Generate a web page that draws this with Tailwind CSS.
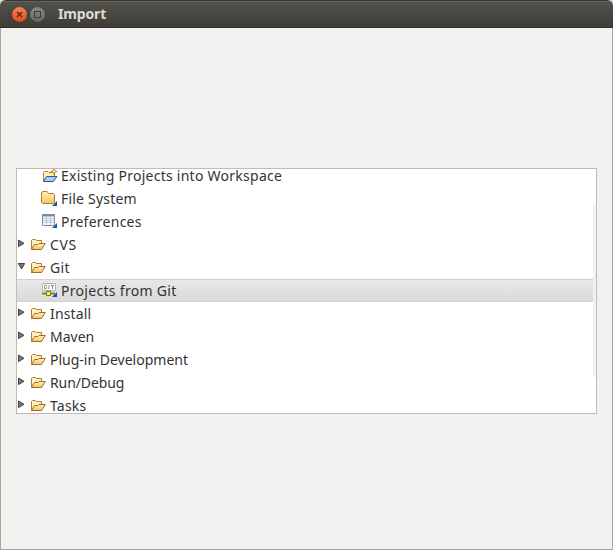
<!DOCTYPE html>
<html lang="en">
<head>
<meta charset="utf-8">
<title>Import</title>
<script src="https://cdn.jsdelivr.net/npm/@tailwindcss/browser@4"></script>
</head>
<body class="h-[550px] w-[613px] overflow-hidden bg-[#d8d8d8] font-['Noto_Sans',sans-serif]">
<svg class="absolute h-0 w-0">
  <linearGradient id="gold" x2="0" y2="1"><stop stop-color="#fff0b8"/><stop offset="1" stop-color="#f3c568"/></linearGradient>
  <symbol id="folder" viewBox="0 0 16 13"><path d="M1.500 10.500V2.500L2.500 1.500H5.500L6.500 2.500H11.500V5.500L11 11.500H1.500Z" fill="#fff0c4" stroke="#b67a2b"/><path d="M1.500 11.500L4.500 6.500H8L9 5.500H15.300L11.500 11.500Z" fill="url(#gold)" stroke="#a96a20"/></symbol>
  <symbol id="right" viewBox="0 0 8 9"><path d="M1.500 1V7.600L7 4.300Z" fill="#777" stroke="#444"/></symbol>
  <symbol id="down" viewBox="0 0 8 8"><path d="M1.300 1.500H7.700L4.500 7Z" fill="#777" stroke="#444"/></symbol>
</svg>
<div class="flex h-full flex-col overflow-hidden rounded-t-[6px] bg-[#a8a69f]">
  <header class="flex h-7 shrink-0 items-center border-t border-b border-t-[#373632] border-b-[#302f2b] bg-linear-to-b from-[#53524b] to-[#3d3c37] pl-[11px] shadow-[inset_0_1px_0_#64635c]">
    <svg class="h-[18px] w-[36px]" viewBox="0 0 36 18">
      <defs><linearGradient id="r" x2="0" y2="1"><stop stop-color="#f58562"/><stop offset="1" stop-color="#df4a16"/></linearGradient><linearGradient id="g" x2="0" y2="1"><stop stop-color="#8d8c83"/><stop offset="1" stop-color="#66655e"/></linearGradient></defs>
      <circle cx="8.500" cy="9.500" r="7.900" fill="url(#r)" stroke="#35342f" stroke-width=".7"/><path d="M6 7L11 12M11 7L6 12" stroke="#572311" stroke-width="1.200"/>
      <circle cx="26.500" cy="9.500" r="7.900" fill="url(#g)" stroke="#35342f" stroke-width=".7"/><path d="M23.500 6.500H29.500V12.500H23.500Z" fill="none" stroke="#3b3a36"/>
    </svg>
    <h1 class="ml-[11px] text-[14px] leading-[20px] font-bold tracking-[-0.15px] text-[#dfdbd2]">Import</h1>
  </header>
  <main class="mx-px mb-px flex-1 bg-[#f2f1ef] px-[15px] pt-[140px]">
    <div class="flex h-[246px] w-[581px] overflow-hidden border border-[#bfbbb7] bg-white">
      <ul class="-mt-[5px] flex-1 text-[14px] leading-[23px] whitespace-nowrap text-[#333]">
        <li class="flex h-[23px] items-center pl-6">
          <svg class="h-4 w-[17px]" viewBox="0 0 17 16"><path d="M2.500 13.500V4.500L3.500 3.500H7L8 4.500H13.500V8.500" fill="#fff0bd" stroke="#b67a2b"/><path d="M2.500 13.500L5.500 8.500H16L12.500 13.500Z" fill="#a9c9f1" stroke="#3059a5"/><path d="M13 0L14.200 2.300L16.800 3.500L14.200 4.700L13 7.500L11.800 4.700L9.200 3.500L11.800 2.300Z" fill="#b8891b"/><path d="M13 2V5M11.500 3.500H14.500" stroke="#fff3a1"/></svg>
          <span class="ml-[3px] tracking-[0.26px]">Existing Projects into Workspace</span></li>
        <li class="flex h-[23px] items-center pl-6">
          <svg class="h-4 w-[17px]" viewBox="0 0 17 16"><path d="M.5 11.500V2L1.500 .5H6L7.500 2.500H12.500L13.500 3.500V11.500L12.500 12.500H1.500Z" fill="url(#gold)" stroke="#b97a29"/><path d="M16 10V15H11Z" fill="#155a96"/></svg>
          <span class="ml-[3px] tracking-[0.2px]">File System</span></li>
        <li class="flex h-[23px] items-center pl-6">
          <svg class="h-4 w-[17px]" viewBox="0 0 17 16"><path d="M1.500 .5H13.500V11.500H1.500Z" fill="#f8fbff" stroke="#8791aa"/><path d="M1 1.500H14" stroke="#7885a5" stroke-width="2"/><path d="M2 4.500H13M2 6.500H13M2 8.500H13M5.500 2V11M9.500 2V11" stroke="#bdc8da"/><path d="M16 9V14H11Z" fill="#155a96"/></svg>
          <span class="ml-[3px] tracking-[0.25px]">Preferences</span></li>
        <li class="flex h-[23px] items-center"><svg class="mb-[2px] h-[9px] w-2"><use href="#right"/></svg><svg class="ml-[5px] h-[13px] w-4"><use href="#folder"/></svg><span class="ml-1 tracking-[0.6px]">CVS</span></li>
        <li class="flex h-[23px] items-center"><svg class="mb-[3px] h-2 w-2"><use href="#down"/></svg><svg class="ml-[5px] h-[13px] w-4"><use href="#folder"/></svg><span class="ml-1 tracking-[0.3px]">Git</span></li>
        <li class="flex h-[23px] items-center border-y border-y-[#d2d1d0] bg-linear-to-b from-[#e9e8e7] to-[#dadad8] pl-6">
          <svg class="h-4 w-[17px]" viewBox="0 0 17 16"><path d="M1.500 .5H14.500V7.500H1.500Z" fill="#fff" stroke="#b3b2ab"/><path d="M6 2.500H3.500V5.500H5.500V4M8 2V6M10 2.500H13M11.500 3V6" fill="none" stroke="#899288"/><path d="M1 10.500H14" stroke="#77862e" stroke-width="2"/><path d="M5.500 8.500H9.500V12.500H5.500Z" fill="#fff06b" stroke="#827119"/><path d="M16 9V14H11Z" fill="#155a96"/></svg>
          <span class="ml-[3px] tracking-[0.3px]">Projects from Git</span></li>
        <li class="flex h-[23px] items-center"><svg class="mb-[2px] h-[9px] w-2"><use href="#right"/></svg><svg class="ml-[5px] h-[13px] w-4"><use href="#folder"/></svg><span class="ml-1 tracking-[0.14px]">Install</span></li>
        <li class="flex h-[23px] items-center"><svg class="mb-[2px] h-[9px] w-2"><use href="#right"/></svg><svg class="ml-[5px] h-[13px] w-4"><use href="#folder"/></svg><span class="ml-1">Maven</span></li>
        <li class="flex h-[23px] items-center"><svg class="mb-[2px] h-[9px] w-2"><use href="#right"/></svg><svg class="ml-[5px] h-[13px] w-4"><use href="#folder"/></svg><span class="ml-1">Plug-in Development</span></li>
        <li class="flex h-[23px] items-center"><svg class="mb-[2px] h-[9px] w-2"><use href="#right"/></svg><svg class="ml-[5px] h-[13px] w-4"><use href="#folder"/></svg><span class="ml-1 tracking-[-0.1px]">Run/Debug</span></li>
        <li class="flex h-[23px] items-center"><svg class="mb-[2px] h-[9px] w-2"><use href="#right"/></svg><svg class="ml-[5px] h-[13px] w-4"><use href="#folder"/></svg><span class="ml-1 tracking-[0.2px]">Tasks</span></li>
      </ul>
      <div class="mt-9 h-[172px] w-[3px] bg-[#f2f1f0]"></div>
    </div>
  </main>
</div>
</body>
</html>
